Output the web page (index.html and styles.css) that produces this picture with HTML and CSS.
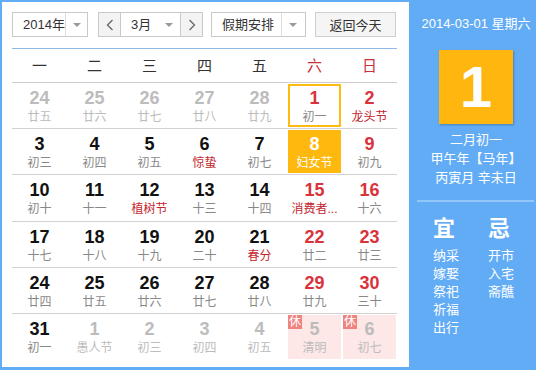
FILE: index.html
```html
<!DOCTYPE html>
<html lang="zh-CN">
<head>
    <meta charset="UTF-8">
    <title>万年历</title>
    <link rel="stylesheet" href="styles.css">
</head>
<body>

    <div class="calendar">
        <div class="main">
            <div class="toolbar">
                <div class="select year-select">
                    <span class="value">2014年</span>
                    <span class="arrow"></span>
                </div>
                <div class="month-group">
                    <span class="nav-btn">
                        <svg width="8" height="12" viewBox="0 0 8 12"><path d="M6.5 1 L1.5 6 L6.5 11" fill="none" stroke="#666" stroke-width="1.3"/></svg>
                    </span>
                    <div class="select month-select">
                        <span class="value">3月</span>
                        <span class="arrow no-line"></span>
                    </div>
                    <span class="nav-btn">
                        <svg width="8" height="12" viewBox="0 0 8 12"><path d="M1.5 1 L6.5 6 L1.5 11" fill="none" stroke="#666" stroke-width="1.3"/></svg>
                    </span>
                </div>
                <div class="select holiday-select">
                    <span class="value">假期安排</span>
                    <span class="arrow"></span>
                </div>
                <button class="today-btn">返回今天</button>
            </div>

            <div class="weekdays">
                <span>一</span><span>二</span><span>三</span><span>四</span><span>五</span>
                <span class="weekend">六</span><span class="weekend">日</span>
            </div>

            <div class="days" id="days"></div>
        </div>

        <div class="side">
            <p class="side-date">2014-03-01 星期六</p>
            <div class="big-day">1</div>
            <p class="lunar-line">二月初一</p>
            <p class="lunar-line">甲午年【马年】</p>
            <p class="lunar-line">丙寅月 辛未日</p>
            <div class="side-line"></div>
            <div class="advice">
                <div class="advice-col">
                    <h3>宜</h3>
                    <p>纳采</p>
                    <p>嫁娶</p>
                    <p>祭祀</p>
                    <p>祈福</p>
                    <p>出行</p>
                </div>
                <div class="advice-col">
                    <h3>忌</h3>
                    <p>开市</p>
                    <p>入宅</p>
                    <p>斋醮</p>
                </div>
            </div>
        </div>
    </div>

    <script>
        // [day, lunar, flags]  o = other month, w = weekend, f = festival text, t = today, s = selected, h = holiday
        const days = [
            [24, "廿五", "o"], [25, "廿六", "o"], [26, "廿七", "o"], [27, "廿八", "o"], [28, "廿九", "o"], [1, "初一", "wt"], [2, "龙头节", "wf"],
            [3, "初三", ""], [4, "初四", ""], [5, "初五", ""], [6, "惊蛰", "f"], [7, "初七", ""], [8, "妇女节", "ws"], [9, "初九", "w"],
            [10, "初十", ""], [11, "十一", ""], [12, "植树节", "f"], [13, "十三", ""], [14, "十四", ""], [15, "消费者...", "wf"], [16, "十六", "w"],
            [17, "十七", ""], [18, "十八", ""], [19, "十九", ""], [20, "二十", ""], [21, "春分", "f"], [22, "廿二", "w"], [23, "廿三", "w"],
            [24, "廿四", ""], [25, "廿五", ""], [26, "廿六", ""], [27, "廿七", ""], [28, "廿八", ""], [29, "廿九", "w"], [30, "三十", "w"],
            [31, "初一", ""], [1, "愚人节", "o"], [2, "初三", "o"], [3, "初四", "o"], [4, "初五", "o"], [5, "清明", "oh"], [6, "初七", "oh"]
        ];

        const grid = document.getElementById("days");
        days.forEach(function(d, i) {
            const cell = document.createElement("div");
            cell.className = "cell" + (i >= 35 ? " last" : "");
            const flags = d[2];
            let cls = "day";
            if (flags.includes("o")) cls += " other";
            if (flags.includes("w")) cls += " weekend";
            if (flags.includes("f")) cls += " festival";
            if (flags.includes("t")) cls += " today";
            if (flags.includes("s")) cls += " selected";
            if (flags.includes("h")) cls += " holiday";
            let html = '<span class="num">' + d[0] + '</span><span class="lunar">' + d[1] + '</span>';
            if (flags.includes("h")) html = '<span class="rest">休</span>' + html;
            cell.innerHTML = '<div class="' + cls + '">' + html + '</div>';
            grid.appendChild(cell);
        });
    </script>
</body>
</html>
```

FILE: styles.css
```css
* {
    margin: 0;
    padding: 0;
    box-sizing: border-box;
}
body {
    font-family: "Liberation Sans", "Noto Sans CJK SC", sans-serif;
    background: #fff;
}
.calendar {
    display: flex;
    width: 536px;
    height: 370px;
    padding: 2px 0 3px 2px;
    background: #62acf6;
}
.main {
    width: 407px;
    flex-shrink: 0;
    background: #fff;
    padding: 10px 12px 0 10px;
}
.toolbar {
    display: flex;
    height: 25px;
    font-size: 13px;
    color: #333;
}
.select {
    display: flex;
    border: 1px solid #c9c9c9;
    background: #fff;
}
.select .value {
    flex: 1;
    line-height: 23px;
    padding-left: 10px;
}
.select .arrow {
    width: 22px;
    border-left: 1px solid #ddd;
    position: relative;
}
.select .arrow::after {
    content: "";
    position: absolute;
    left: 7px;
    top: 10px;
    border-left: 4px solid transparent;
    border-right: 4px solid transparent;
    border-top: 4px solid #999;
}
.select .arrow.no-line {
    border-left: none;
}
.year-select {
    width: 76px;
}
.month-group {
    display: flex;
    margin-left: 10px;
}
.nav-btn {
    width: 23px;
    display: flex;
    align-items: center;
    justify-content: center;
    background: #f3f3f3;
    border: 1px solid #c9c9c9;
}
.month-select {
    width: 59px;
    border-left: none;
    border-right: none;
}
.holiday-select {
    width: 95px;
    margin-left: 8px;
}
.holiday-select .arrow {
    width: 24px;
}
.today-btn {
    width: 81px;
    margin-left: 9px;
    border: 1px solid #cfcfcf;
    background: #f5f5f5;
    font-family: inherit;
    font-size: 13px;
    color: #333;
}
.weekdays {
    display: grid;
    grid-template-columns: repeat(7, minmax(0, 1fr));
    margin-top: 11px;
    border-top: 1px solid #8cbbea;
    border-bottom: 1px solid #cfcfcf;
    height: 35px;
    font-size: 15px;
    line-height: 33px;
    text-align: center;
    color: #333;
}
.weekdays .weekend {
    color: #c9313a;
}
.days {
    display: grid;
    grid-template-columns: repeat(7, minmax(0, 1fr));
    grid-auto-rows: 46.2px;
}
.cell {
    border-bottom: 1px solid #d2d2d2;
    padding: 1px;
    min-width: 0;
}
.cell.last {
    border-bottom: none;
}
.day {
    position: relative;
    height: 100%;
    text-align: center;
    padding-top: 4px;
}
.day .num {
    display: block;
    font-size: 18px;
    font-weight: bold;
    line-height: 20px;
    color: #111;
}
.day .lunar {
    display: block;
    font-size: 12px;
    line-height: 18px;
    color: #888;
    white-space: nowrap;
}
.day.weekend .num {
    color: #d9333c;
}
.day.festival .lunar {
    color: #c4262e;
}
.day.other .num,
.day.other .lunar {
    color: #bcbcbc;
}
.day.today {
    box-shadow: inset 0 0 0 2px #ffbb10;
}
.day.selected {
    background: #ffb80d;
}
.day.selected .num,
.day.selected .lunar {
    color: #fff;
}
.day.holiday {
    background: #fde7e7;
    height: 44px;
}
.rest {
    position: absolute;
    left: 0;
    top: 0;
    width: 14px;
    height: 14px;
    background: #f1837f;
    color: #fff;
    font-size: 12px;
    line-height: 14px;
    text-align: center;
}
.side {
    flex: 1;
    color: #fff;
    text-align: center;
}
.side-date {
    margin-top: 12px;
    font-size: 13px;
    line-height: 20px;
}
.big-day {
    width: 74px;
    height: 74px;
    margin: 16px auto 0;
    background: #ffb70f;
    box-shadow: 1px 1px 2px rgba(0, 0, 0, 0.25);
    font-size: 58px;
    font-weight: bold;
    line-height: 74px;
    color: #fff;
}
.big-day + .lunar-line {
    margin-top: 6px;
}
.lunar-line {
    font-size: 13px;
    line-height: 19px;
}
.side-line {
    height: 2px;
    margin: 13px 9px 0 8px;
    background: #93c6f8;
}
.advice {
    display: flex;
    padding-left: 24px;
    margin-top: 14px;
    text-align: left;
}
.advice-col {
    width: 55px;
}
.advice-col h3 {
    font-size: 22px;
    line-height: 26px;
    margin-bottom: 5px;
}
.advice-col p {
    font-size: 13px;
    line-height: 18px;
}
```
